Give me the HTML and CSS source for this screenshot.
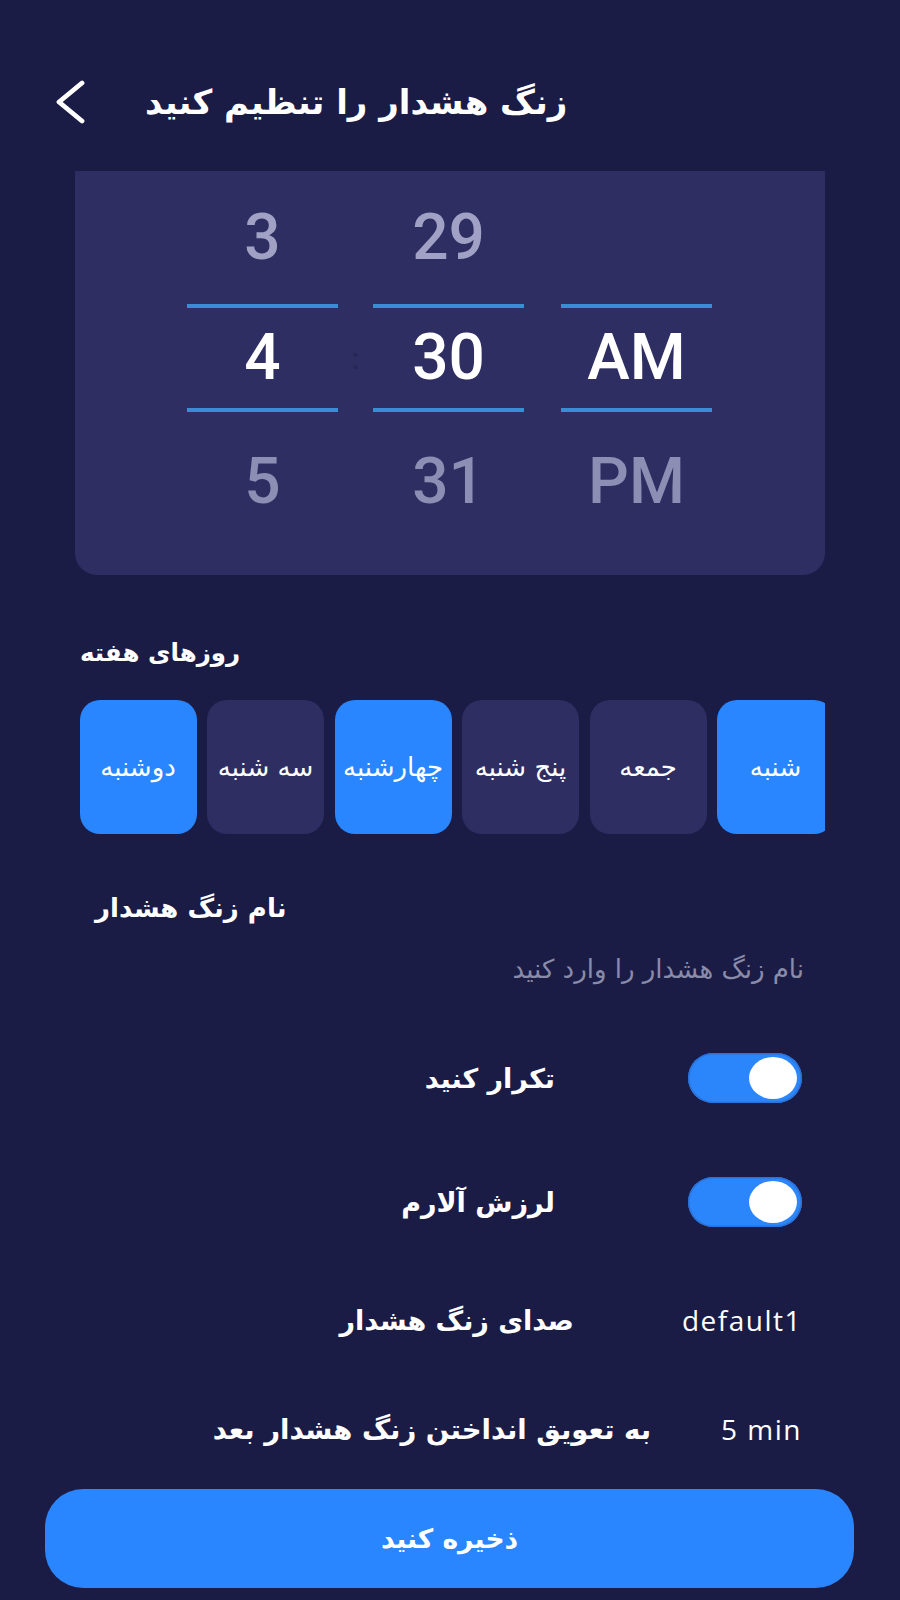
FILE: index.html
```html
<!DOCTYPE html>
<html lang="fa">
<head>
<meta charset="utf-8">
<title>زنگ هشدار را تنظیم کنید</title>
<link rel="stylesheet" href="styles.css">
</head>
<body>
<div class="screen">
  <header class="topbar">
    <svg class="back" viewBox="0 0 30 44" width="30" height="44" aria-hidden="true">
      <path d="M27 3 L4 22 L27 41" fill="none" stroke="#ffffff" stroke-width="4.8" stroke-linecap="round" stroke-linejoin="round"/>
    </svg>
    <h1 class="title" dir="rtl">زنگ هشدار را تنظیم کنید</h1>
  </header>

  <section class="picker">
    <div class="col">
      <div class="cell cell-top dim">3</div>
      <div class="rule"></div>
      <div class="cell cell-mid">4</div>
      <div class="rule"></div>
      <div class="cell cell-bot dim2">5</div>
    </div>
    <div class="sep">:</div>
    <div class="col">
      <div class="cell cell-top dim">29</div>
      <div class="rule"></div>
      <div class="cell cell-mid">30</div>
      <div class="rule"></div>
      <div class="cell cell-bot dim2">31</div>
    </div>
    <div class="col col-ampm">
      <div class="cell cell-top dim"></div>
      <div class="rule"></div>
      <div class="cell cell-mid">AM</div>
      <div class="rule"></div>
      <div class="cell cell-bot dim2">PM</div>
    </div>
  </section>

  <h2 class="section-label" dir="rtl">روزهای هفته</h2>

  <div class="days">
    <div class="days-track">
      <div class="day active" dir="rtl">دوشنبه</div>
      <div class="day" dir="rtl">سه شنبه</div>
      <div class="day active" dir="rtl">چهارشنبه</div>
      <div class="day" dir="rtl">پنج شنبه</div>
      <div class="day" dir="rtl">جمعه</div>
      <div class="day active" dir="rtl">شنبه</div>
    </div>
  </div>

  <h2 class="name-label" dir="rtl">نام زنگ هشدار</h2>
  <div class="name-input" dir="rtl">نام زنگ هشدار را وارد کنید</div>

  <div class="setting setting-toggle first">
    <span class="setting-label" dir="rtl">تکرار کنید</span>
    <span class="switch on"><span class="knob"></span></span>
  </div>
  <div class="setting setting-toggle">
    <span class="setting-label" dir="rtl">لرزش آلارم</span>
    <span class="switch on"><span class="knob"></span></span>
  </div>
  <div class="setting setting-sound">
    <span class="setting-label" dir="rtl">صدای زنگ هشدار</span>
    <span class="setting-value">default1</span>
  </div>
  <div class="setting setting-snooze">
    <span class="setting-label" dir="rtl">به تعویق انداختن زنگ هشدار بعد</span>
    <span class="setting-value">5 min</span>
  </div>

  <button class="save" type="button" dir="rtl">ذخیره کنید</button>
</div>
</body>
</html>
```

FILE: styles.css
```css
html, body {
  margin: 0;
  padding: 0;
  background: #1b1c46;
}

body {
  width: 900px;
  height: 1600px;
  overflow: hidden;
  font-family: "DejaVu Sans", "Noto Sans", sans-serif;
  color: #ffffff;
}

.screen {
  display: flex;
  flex-direction: column;
}

/* Header */
.topbar {
  display: flex;
  align-items: center;
  height: 80px;
  margin-top: 62px;
  padding-left: 55px;
  gap: 60px;
}

.back {
  display: block;
  flex: none;
}

.title {
  margin: 0;
  font-size: 34px;
  font-weight: 700;
  line-height: 1;
}

/* Time picker */
.picker {
  display: flex;
  align-items: flex-start;
  margin: 29px 75px 0 74.5px;
  height: 403.5px;
  padding-left: 112.5px;
  background: #2e2e63;
  border-radius: 0 0 22px 22px;
  box-sizing: border-box;
  font-family: Roboto, "Liberation Sans", sans-serif;
  font-weight: 500;
}

.col {
  display: flex;
  flex-direction: column;
  width: 151px;
}

.col-ampm {
  margin-left: 37px;
}

.cell {
  display: flex;
  align-items: center;
  justify-content: center;
  font-size: 64px;
  line-height: 1;
  color: #ffffff;
}

.cell-top { height: 133px; }
.cell-mid { height: 100px; }
.cell-bot { height: 142px; padding-bottom: 2px; box-sizing: border-box; }

.dim { color: #a0a1c4; }
.dim2 { color: #8d8eb3; }

.rule {
  height: 4px;
  background: #3a8cd3;
}

.sep {
  width: 35px;
  height: 100px;
  margin-top: 137px;
  display: flex;
  align-items: center;
  justify-content: center;
  font-size: 30px;
  color: #262754;
}

/* Days */
.section-label {
  margin: 63.5px 0 0 80px;
  font-size: 24.5px;
  font-weight: 700;
  line-height: 30px;
  align-self: flex-start;
}

.days {
  margin: 32px 75.5px 0 74.5px;
  overflow: hidden;
}

.days-track {
  display: flex;
  gap: 10.5px;
  padding-left: 5px;
  width: max-content;
}

.day {
  width: 117px;
  height: 134px;
  border-radius: 20px;
  background: #2e2e63;
  display: flex;
  align-items: center;
  justify-content: center;
  font-size: 26px;
  color: #ffffff;
  white-space: nowrap;
}

.day.active {
  background: #2a86ff;
}

/* Name */
.name-label {
  margin: 56px 0 0 95px;
  font-size: 26px;
  font-weight: 700;
  line-height: 36px;
  align-self: flex-start;
}

.name-input {
  margin: 28px 96px 0 0;
  align-self: flex-end;
  font-size: 26px;
  line-height: 30px;
  color: #8a8ba9;
}

/* Settings rows */
.setting {
  display: flex;
  justify-content: flex-end;
  align-items: center;
  margin-right: 98px;
}

.setting-label {
  font-size: 27px;
  font-weight: 700;
  white-space: nowrap;
}

.setting-toggle {
  height: 50px;
  gap: 133px;
  margin-top: 74px;
}

.setting-toggle.first {
  margin-top: 69px;
}

.switch {
  position: relative;
  display: block;
  width: 114px;
  height: 50px;
  border-radius: 25px;
  background: #2c86fb;
  box-shadow: inset 0 0 0 1.5px #2a72d8;
}

.knob {
  position: absolute;
  top: 4px;
  right: 5px;
  width: 48px;
  height: 42px;
  border-radius: 50%;
  background: #ffffff;
}

.setting-sound {
  height: 40px;
  margin-top: 73px;
  gap: 108px;
}

.setting-snooze {
  height: 40px;
  margin-top: 69px;
  gap: 70px;
}

.setting-snooze .setting-label {
  font-size: 27.5px;
}

.setting-value {
  font-family: "Open Sans", "DejaVu Sans", sans-serif;
  font-size: 28px;
  font-weight: 400;
  letter-spacing: 1.5px;
  color: #ffffff;
}

/* Save */
.save {
  margin: 40px 46px 0 45px;
  height: 99px;
  border: none;
  border-radius: 38px;
  background: #2a86ff;
  color: #ffffff;
  font-family: "DejaVu Sans", sans-serif;
  font-size: 26.5px;
  font-weight: 700;
}
```
